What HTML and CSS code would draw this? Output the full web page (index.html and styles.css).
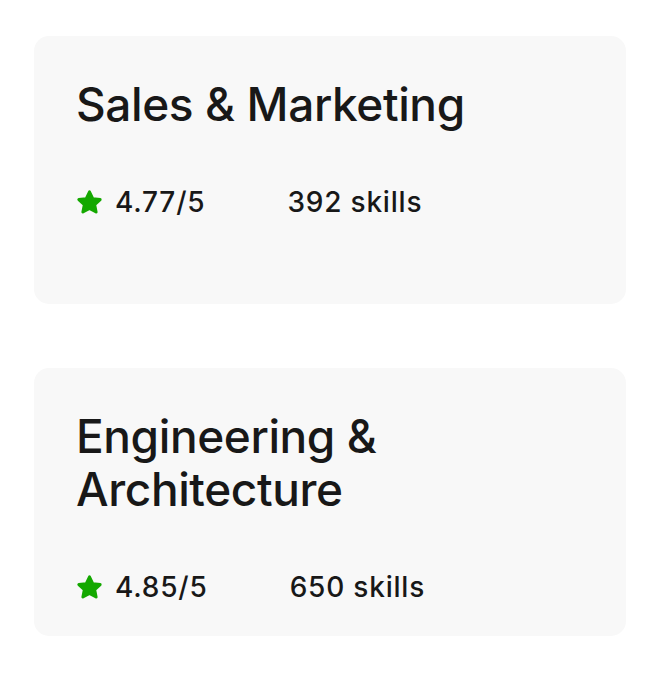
FILE: index.html
```html
<!DOCTYPE html>
<html lang="en">
<head>
<meta charset="utf-8">
<title>Categories</title>
<link rel="stylesheet" href="styles.css">
</head>
<body>
<div class="list">
  <div class="card">
    <h2 class="title">Sales &amp; Marketing</h2>
    <div class="stats">
      <div class="rating">
        <svg class="star" viewBox="0 0 24 24" aria-hidden="true"><polygon points="12,2.5 14.9,8.6 21.5,9.4 16.6,13.9 17.9,20.5 12,17.2 6.1,20.5 7.4,13.9 2.5,9.4 9.1,8.6"/></svg>
        <span>4.77/5</span>
      </div>
      <span class="skills">392 skills</span>
    </div>
  </div>
  <div class="card">
    <h2 class="title">Engineering &amp; Architecture</h2>
    <div class="stats">
      <div class="rating">
        <svg class="star" viewBox="0 0 24 24" aria-hidden="true"><polygon points="12,2.5 14.9,8.6 21.5,9.4 16.6,13.9 17.9,20.5 12,17.2 6.1,20.5 7.4,13.9 2.5,9.4 9.1,8.6"/></svg>
        <span>4.85/5</span>
      </div>
      <span class="skills">650 skills</span>
    </div>
  </div>
</div>
</body>
</html>
```
FILE: styles.css
```css
html, body {
  margin: 0;
  padding: 0;
  background: #ffffff;
}
body {
  font-family: Inter, "Liberation Sans", Arial, sans-serif;
  color: #181818;
}
.list {
  display: flex;
  flex-direction: column;
  gap: 64px;
  padding: 36px 28px 0 34px;
}
.card {
  box-sizing: border-box;
  height: 268px;
  background: #f8f8f8;
  border-radius: 15px;
  padding: 42px 42px 20px 42px;
  display: flex;
  flex-direction: column;
}
.title {
  margin: 0;
  font-size: 46px;
  font-weight: 500;
  line-height: 53px;
  letter-spacing: -0.4px;
  max-width: 400px;
}
.stats {
  margin-top: 54px;
  display: flex;
  align-items: center;
  gap: 82px;
  font-size: 28px;
  line-height: 34px;
  font-weight: 500;
  letter-spacing: 0.8px;
}
.rating {
  display: flex;
  align-items: center;
  gap: 12px;
}
.star {
  width: 27px;
  height: 27px;
  fill: #14a800;
  stroke: #14a800;
  stroke-width: 2.6;
  stroke-linejoin: round;
}
```
